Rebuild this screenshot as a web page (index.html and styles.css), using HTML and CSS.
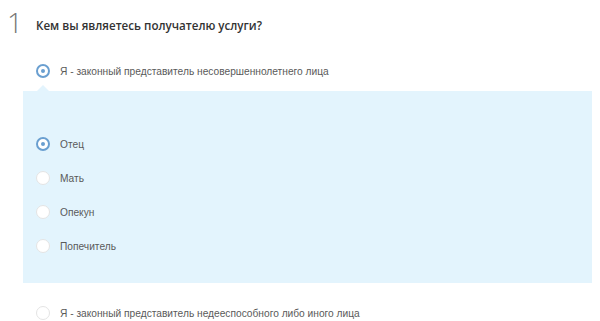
FILE: index.html
```html
<!DOCTYPE html>
<html lang="ru">
<head>
    <meta charset="UTF-8">
    <title>Получатель услуги</title>
    <link rel="stylesheet" href="styles.css">
</head>
<body>
    <div class="step">
        <div class="step-head">
            <div class="step-num">1</div>
            <div class="step-title">Кем вы являетесь получателю услуги?</div>
        </div>

        <div class="option">
            <span class="radio checked"></span>
            <span class="label">Я - законный представитель несовершеннолетнего лица</span>
        </div>

        <div class="sub-panel">
            <div class="option">
                <span class="radio checked"></span>
                <span class="label">Отец</span>
            </div>
            <div class="option">
                <span class="radio"></span>
                <span class="label">Мать</span>
            </div>
            <div class="option">
                <span class="radio"></span>
                <span class="label">Опекун</span>
            </div>
            <div class="option">
                <span class="radio"></span>
                <span class="label">Попечитель</span>
            </div>
        </div>

        <div class="option">
            <span class="radio"></span>
            <span class="label">Я - законный представитель недееспособного либо иного лица</span>
        </div>
    </div>
</body>
</html>
```

FILE: styles.css
```css
:root {
    --panel-color: #e3f4fd;
    --radio-color: #6a9fd0;
    --text-color: #5a5a5a;
}
body {
    margin: 0;
    padding: 0;
    background: #fff;
    font-family: 'Liberation Sans', Arial, sans-serif;
    color: var(--text-color);
}
.step {
    padding: 0 8px 0 23px;
}
.step-head {
    display: flex;
    align-items: flex-start;
    margin-left: -16px;
    height: 51px;
}
.step-num {
    width: 29px;
    padding-top: 8px;
    font-family: 'Open Sans', sans-serif;
    font-weight: 300;
    font-size: 28px;
    line-height: 28px;
    color: #777;
}
.step-title {
    padding-top: 18px;
    font-family: 'Open Sans', sans-serif;
    font-weight: 600;
    font-size: 11.6px;
    line-height: 16px;
    color: #333;
}
.option {
    display: flex;
    align-items: center;
    height: 40px;
    padding-left: 13px;
}
.label {
    margin-left: 10px;
    font-size: 10.2px;
}
.radio {
    box-sizing: border-box;
    width: 14px;
    height: 14px;
    border-radius: 50%;
    border: 1px solid #e4e4e4;
    background: #fff;
    flex: none;
    display: flex;
    align-items: center;
    justify-content: center;
}
.radio.checked {
    border: 2px solid var(--radio-color);
}
.radio.checked::after {
    content: '';
    width: 4px;
    height: 4px;
    border-radius: 50%;
    background: var(--radio-color);
}
.sub-panel {
    position: relative;
    margin-top: 0;
    margin-bottom: 10px;
    padding: 36px 0 20px;
    background: var(--panel-color);
}
.sub-panel::before {
    content: '';
    position: absolute;
    top: -6px;
    left: 14px;
    border-left: 6px solid transparent;
    border-right: 6px solid transparent;
    border-bottom: 6px solid var(--panel-color);
}
.sub-panel .option {
    height: 34px;
}
```
